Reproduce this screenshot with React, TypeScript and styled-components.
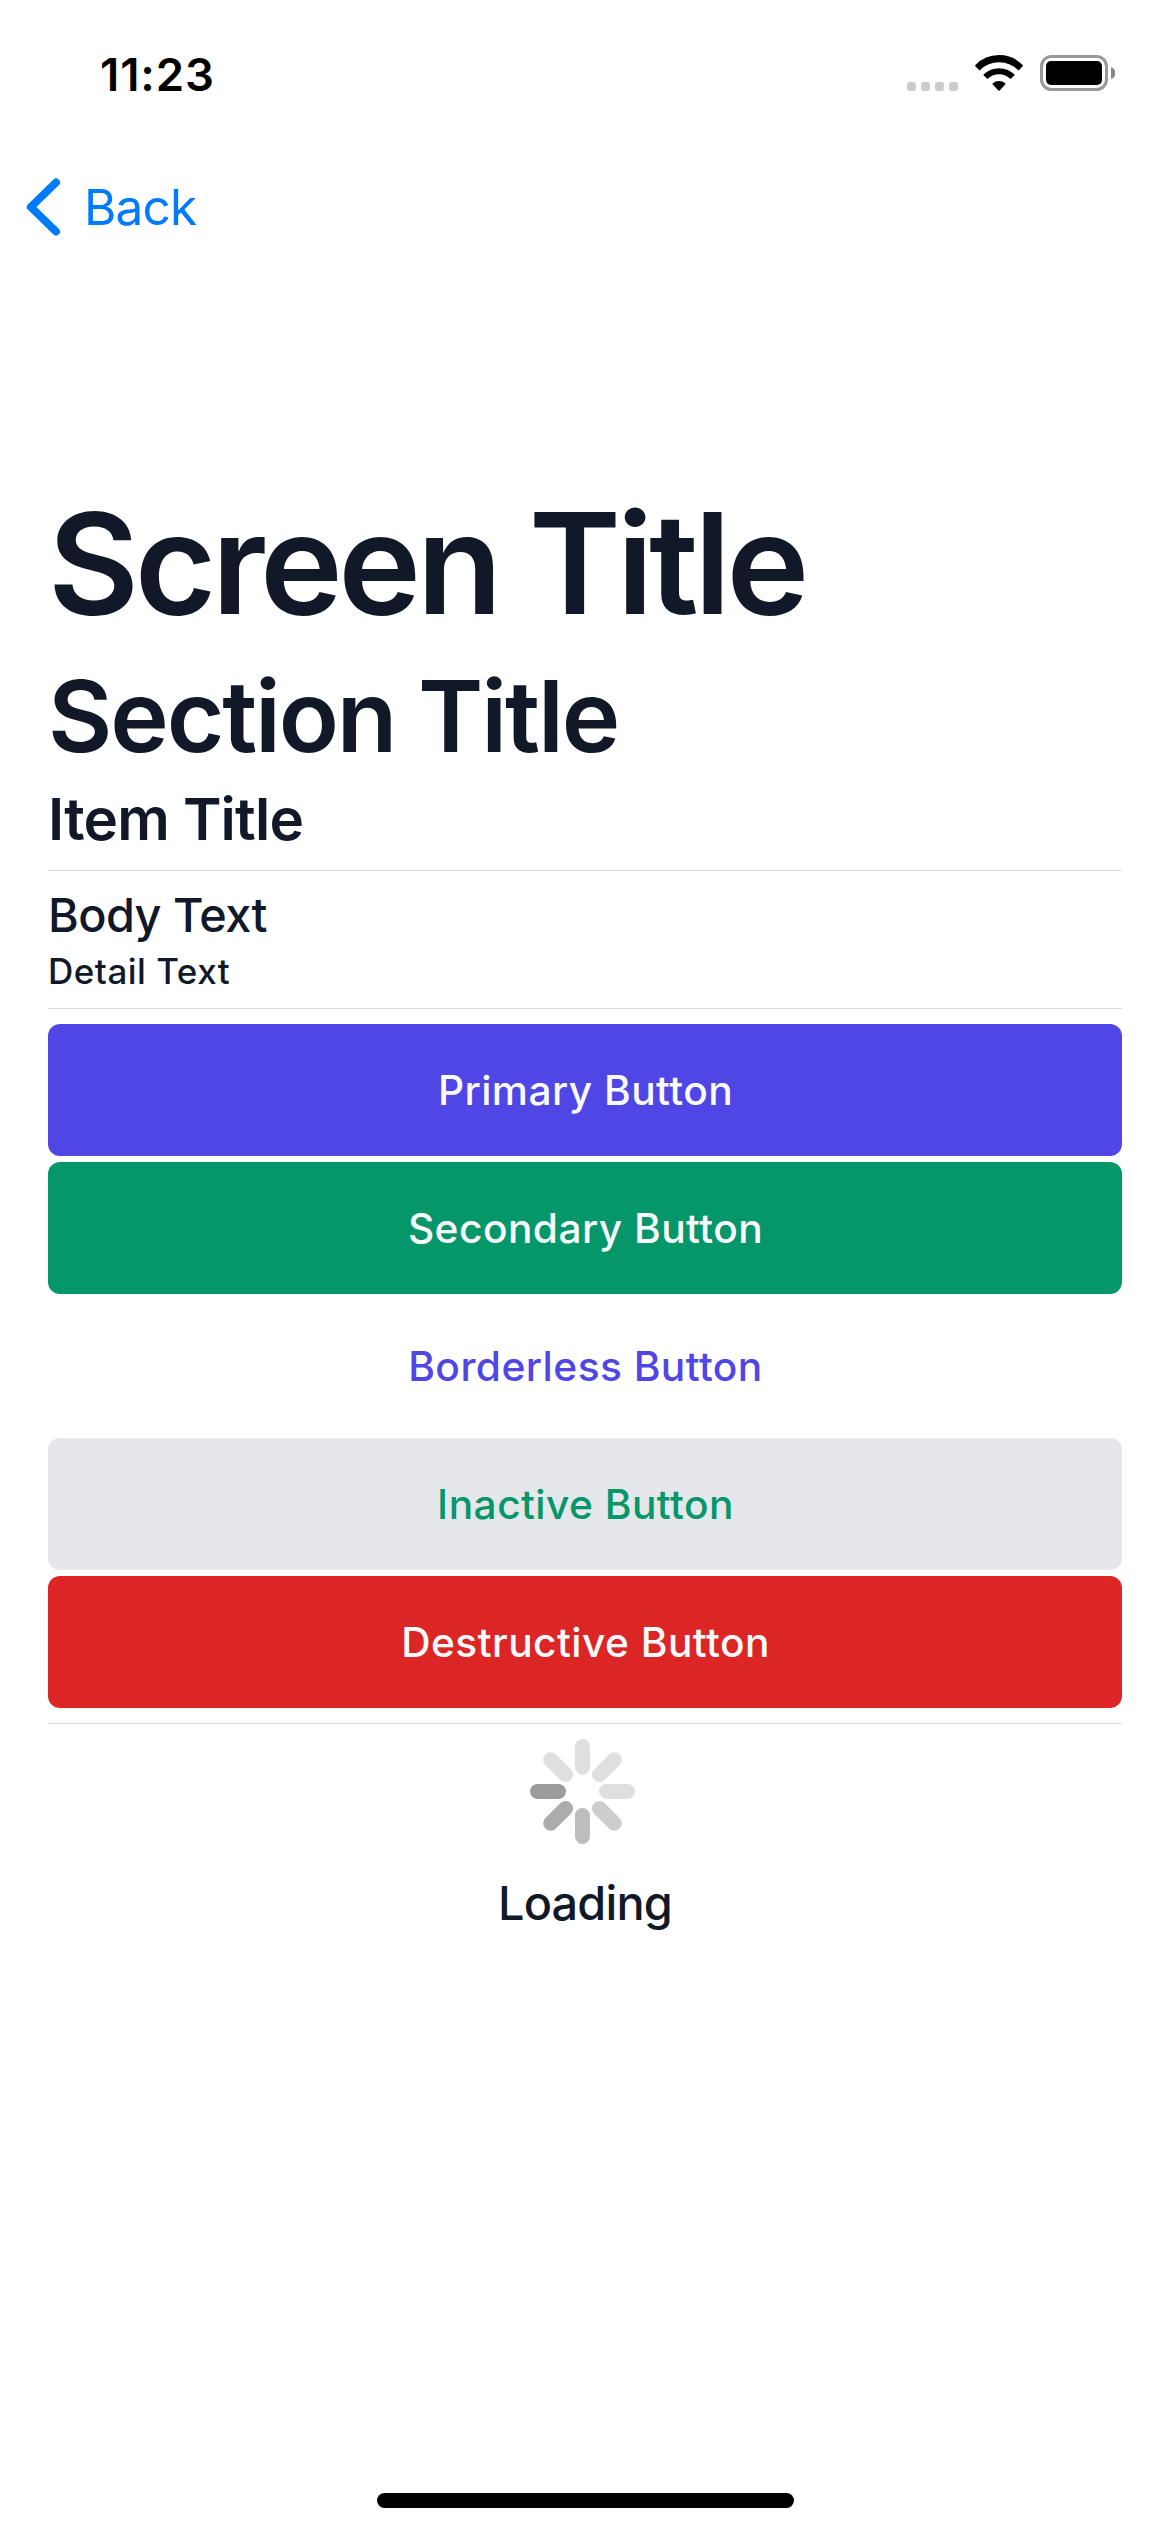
import React from 'react';
import styled, { createGlobalStyle } from 'styled-components';

const GlobalStyle = createGlobalStyle`
  * { box-sizing: border-box; }
  body { margin: 0; background: #ffffff; }
`;

const Screen = styled.div`
  width: 1170px;
  height: 2532px;
  display: flex;
  flex-direction: column;
  background: #ffffff;
  color: #111827;
  font-family: Inter, 'Liberation Sans', sans-serif;
  overflow: hidden;
`;

const StatusBar = styled.header`
  height: 141px;
  padding: 46px 55px 0 100px;
  display: flex;
  justify-content: space-between;
  align-items: flex-start;
  color: #000000;
`;

const Clock = styled.time`
  font-size: 45.5px;
  line-height: 57px;
  font-weight: 600;
  letter-spacing: 0.9px;
`;

const StatusIcons = styled.div`
  padding-top: 9px;
  display: flex;
  align-items: flex-start;
  gap: 17px;
`;

const CellDots = styled.div`
  display: flex;
  gap: 5px;
  padding-top: 27px;
`;

const CellDot = styled.i`
  width: 9px;
  height: 9px;
  border-radius: 3px;
  background: #cccccc;
`;

const NavBar = styled.nav`
  height: 132px;
  padding-left: 26px;
  display: flex;
  align-items: center;
`;

const BackButton = styled.button`
  display: flex;
  align-items: center;
  gap: 23px;
  padding: 0;
  border: 0;
  background: none;
  color: #007aff;
  font-family: inherit;
  font-size: 49.5px;
  line-height: 60px;
  letter-spacing: -0.8px;
`;

const Content = styled.main`
  flex: 1;
  padding: 204px 48px 0;
  display: flex;
  flex-direction: column;
`;

interface LabelProps {
  $size: number;
  $line: number;
  $weight: number;
  $track: number;
  $before?: number;
  $after?: number;
}

const Label = styled.p<LabelProps>`
  margin: ${(p) => p.$before ?? 0}px 0 ${(p) => p.$after ?? 0}px;
  font-size: ${(p) => p.$size}px;
  line-height: ${(p) => p.$line}px;
  font-weight: ${(p) => p.$weight};
  letter-spacing: ${(p) => p.$track}px;
  white-space: nowrap;
`;

const Divider = styled.hr`
  width: 100%;
  height: 1px;
  margin: 0 0 15px;
  border: 0;
  background: #dadada;
`;

const ButtonStack = styled.div`
  display: flex;
  flex-direction: column;
  gap: 6px;
  margin-bottom: 15px;
`;

const ActionButton = styled.button<{ $bg: string; $fg: string }>`
  height: 132px;
  padding: 2px 0 0 1px;
  border: 0;
  border-radius: 12px;
  background: ${(p) => p.$bg};
  color: ${(p) => p.$fg};
  font-family: inherit;
  font-size: 40.7px;
  font-weight: 500;
  line-height: 50px;
  letter-spacing: 0.45px;
`;

const Loading = styled.section`
  display: flex;
  flex-direction: column;
  align-items: center;
  gap: 31px;
`;

const SpinnerArt = styled.svg`
  width: 105px;
  height: 105px;
  margin-right: 5px;
`;

const Footer = styled.footer`
  display: flex;
  justify-content: center;
  padding: 0 0 24px 1px;
`;

const HomeIndicator = styled.div`
  width: 417px;
  height: 15px;
  border-radius: 8px;
  background: #000000;
`;

const spokes = ['#dfdfdf', '#dfdfdf', '#dfdfdf', '#cdcdcf', '#bdbdbf', '#acacae', '#9c9c9e', '#dfdfdf'];

const buttons = [
  { label: 'Primary Button', bg: '#4f46e5', fg: '#f9fafb' },
  { label: 'Secondary Button', bg: '#059669', fg: '#f9fafb' },
  { label: 'Borderless Button', bg: 'transparent', fg: '#4f46e5' },
  { label: 'Inactive Button', bg: '#e5e7eb', fg: '#059669' },
  { label: 'Destructive Button', bg: '#dc2626', fg: '#f9fafb' },
];

const WifiIcon = () => (
  <svg width="48" height="36" viewBox="0 0 144 108">
    <g fill="#000" stroke="#000" strokeWidth="5" strokeLinejoin="round">
      <path d="M3 32 A96 96 0 0 1 141 32 L130.500 43 A83 83 0 0 0 13.500 43 Z" />
      <path d="M28 59.500 A64 64 0 0 1 116 59.500 L106.500 69 A50 50 0 0 0 37.500 69 Z" />
      <path d="M55 86.500 A27 27 0 0 1 89 86.500 L72 104.500 Z" />
    </g>
  </svg>
);

const BatteryIcon = () => (
  <svg width="75" height="36" viewBox="0 0 75 36">
    <rect x="1.5" y="1.5" width="65" height="33" rx="10" fill="none" stroke="#999" strokeWidth="3" />
    <rect x="6" y="6" width="56" height="24" rx="5" fill="#000" />
    <path d="M71 12 A6.3 6.3 0 0 1 71 24 Z" fill="#888" />
  </svg>
);

const Spinner = () => (
  <SpinnerArt viewBox="-52.5 -52.5 105 105">
    {spokes.map((color, i) => (
      <rect key={i} x="-7.5" y="-52.5" width="15" height="36" rx="7.5" fill={color} transform={`rotate(${i * 45})`} />
    ))}
  </SpinnerArt>
);

export default function App() {
  return (
    <Screen>
      <GlobalStyle />
      <StatusBar>
        <Clock>11:23</Clock>
        <StatusIcons>
          <CellDots>
            <CellDot />
            <CellDot />
            <CellDot />
            <CellDot />
          </CellDots>
          <WifiIcon />
          <BatteryIcon />
        </StatusIcons>
      </StatusBar>
      <NavBar>
        <BackButton>
          <svg width="35" height="58" viewBox="0 0 35 58">
            <path d="M30 4.500 L4.800 29 L30 53.500" fill="none" stroke="#007aff" strokeWidth="8" strokeLinecap="round" strokeLinejoin="round" />
          </svg>
          Back
        </BackButton>
      </NavBar>
      <Content>
        <Label as="h1" $size={140} $line={172} $weight={600} $track={-4.4} $after={7}>Screen Title</Label>
        <Label as="h2" $size={99} $line={120} $weight={600} $track={-2.15} $after={7}>Section Title</Label>
        <Label as="h3" $size={58.4} $line={72} $weight={600} $track={-0.8} $after={15}>Item Title</Label>
        <Divider />
        <Label $size={46.8} $line={57} $weight={500} $track={-0.55} $before={1} $after={6}>Body Text</Label>
        <Label $size={35} $line={43} $weight={500} $track={0.5} $after={15}>Detail Text</Label>
        <Divider />
        <ButtonStack>
          {buttons.map((b) => (
            <ActionButton key={b.label} $bg={b.bg} $fg={b.fg}>{b.label}</ActionButton>
          ))}
        </ButtonStack>
        <Divider />
        <Loading>
          <Spinner />
          <Label $size={46.8} $line={57} $weight={500} $track={-0.8}>Loading</Label>
        </Loading>
      </Content>
      <Footer>
        <HomeIndicator />
      </Footer>
    </Screen>
  );
}
